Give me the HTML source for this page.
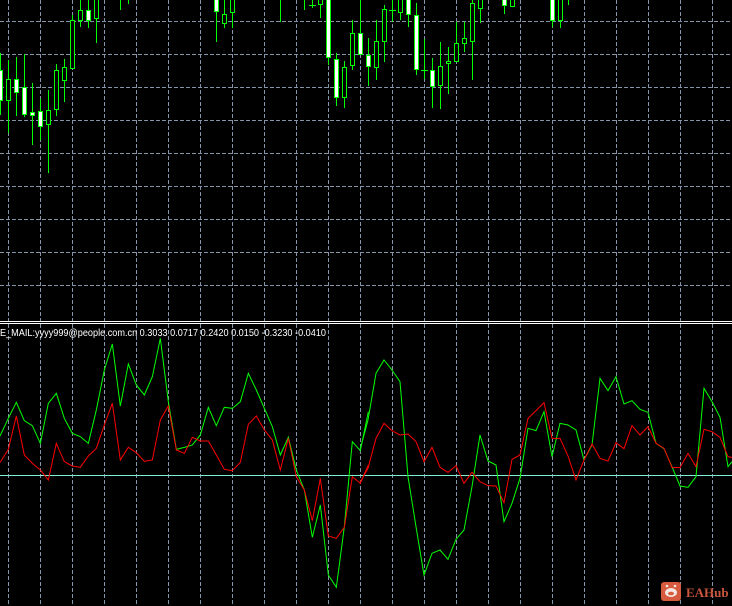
<!DOCTYPE html>
<html><head><meta charset="utf-8"><style>
html,body{margin:0;padding:0;background:#000;overflow:hidden}
svg{display:block}
</style></head><body>
<svg width="732" height="606" viewBox="0 0 732 606" xmlns="http://www.w3.org/2000/svg" shape-rendering="crispEdges">
<rect width="732" height="606" fill="#000"/>
<g stroke="#8494a8" stroke-width="1" stroke-dasharray="4 2">
<path d="M8.5 0V606M40.5 0V606M72.5 0V606M104.5 0V606M136.5 0V606M168.5 0V606M200.5 0V606M232.5 0V606M264.5 0V606M296.5 0V606M328.5 0V606M360.5 0V606M392.5 0V606M424.5 0V606M456.5 0V606M488.5 0V606M520.5 0V606M552.5 0V606M584.5 0V606M616.5 0V606M648.5 0V606M680.5 0V606M712.5 0V606"/>
<path d="M0 21.5H732M0 54.5H732M0 87.5H732M0 120.5H732M0 153.5H732M0 186.5H732M0 219.5H732M0 252.5H732M0 285.5H732"/>
</g>
<g stroke="#00ff00" stroke-width="1">
<path d="M0.5 53V115M8.5 60V133M16.5 57V116M24.5 54V117M32.5 83V145M40.5 99V140M48.5 90V173M56.5 64V116M64.5 59V102M72.5 15V69M80.5 0V27M88.5 0V28M96.5 0V43M120.5 0V10M128.5 0V4M216.5 0V42M224.5 0V28M232.5 0V28M280.5 0V22M304.5 0V10M312.5 0V8M320.5 0V18M328.5 0V65M336.5 53V106M344.5 61V108M352.5 20V70M360.5 0V55M368.5 38V86M376.5 20V80M384.5 5V62M392.5 0V22M400.5 0V20M408.5 0V27M416.5 3V75M424.5 39V79M432.5 58V108M440.5 42V109M448.5 47V94M456.5 22V62M464.5 22V52M472.5 0V80M480.5 0V23M504.5 0V14M512.5 0V7M552.5 0V27M560.5 0V28M568.5 0V5"/>
<path d="M309 5.5H316M389 10.5H396M421 70.5H428"/>
</g>
<g stroke="#00ff00" stroke-width="1">
<g fill="#fff">
<rect x="-1.5" y="70.5" width="4" height="30"/>
<rect x="14.5" y="79.5" width="4" height="13"/>
<rect x="22.5" y="87.5" width="4" height="27"/>
<rect x="30.5" y="112.5" width="4" height="3"/>
<rect x="38.5" y="111.5" width="4" height="15"/>
<rect x="86.5" y="10.5" width="4" height="10"/>
<rect x="214.5" y="-1.5" width="4" height="13"/>
<rect x="326.5" y="-1.5" width="4" height="59"/>
<rect x="334.5" y="59.5" width="4" height="38"/>
<rect x="358.5" y="33.5" width="4" height="21"/>
<rect x="366.5" y="55.5" width="4" height="11"/>
<rect x="406.5" y="-1.5" width="4" height="16"/>
<rect x="414.5" y="15.5" width="4" height="54"/>
<rect x="430.5" y="70.5" width="4" height="16"/>
<rect x="502.5" y="-1.5" width="4" height="7"/>
<rect x="550.5" y="-1.5" width="4" height="22"/>
</g>
<g fill="#000">
<rect x="6.5" y="79.5" width="4" height="21"/>
<rect x="46.5" y="110.5" width="4" height="14"/>
<rect x="54.5" y="70.5" width="4" height="39"/>
<rect x="62.5" y="67.5" width="4" height="13"/>
<rect x="70.5" y="20.5" width="4" height="48"/>
<rect x="78.5" y="10.5" width="4" height="10"/>
<rect x="94.5" y="-1.5" width="4" height="20"/>
<rect x="222.5" y="14.5" width="4" height="9"/>
<rect x="230.5" y="-1.5" width="4" height="14"/>
<rect x="318.5" y="-1.5" width="4" height="6"/>
<rect x="342.5" y="67.5" width="4" height="30"/>
<rect x="350.5" y="33.5" width="4" height="32"/>
<rect x="374.5" y="41.5" width="4" height="26"/>
<rect x="382.5" y="9.5" width="4" height="32"/>
<rect x="398.5" y="-1.5" width="4" height="14"/>
<rect x="438.5" y="66.5" width="4" height="19"/>
<rect x="446.5" y="61.5" width="4" height="2"/>
<rect x="454.5" y="43.5" width="4" height="18"/>
<rect x="462.5" y="38.5" width="4" height="5"/>
<rect x="470.5" y="3.5" width="4" height="38"/>
<rect x="478.5" y="-1.5" width="4" height="10"/>
<rect x="510.5" y="-1.5" width="4" height="8"/>
<rect x="558.5" y="-1.5" width="4" height="22"/>
</g>
</g>
<rect x="0" y="321" width="732" height="1" fill="#fff"/>
<rect x="0" y="323" width="732" height="1" fill="#fff"/>
<text x="0" y="336" font-family="Liberation Sans, sans-serif" font-size="10.5" fill="#fff" textLength="326" lengthAdjust="spacingAndGlyphs" shape-rendering="auto">E_MAIL:yyyy999@people.com.cn 0.3033 0.0717 0.2420 0.0150 -0.3230 -0.0410</text>
<rect x="0" y="475" width="732" height="1" fill="#7ff0d8"/>
<g fill="none" stroke-width="3" shape-rendering="auto" stroke-linejoin="miter">
<g transform="translate(0,330) scale(0.33333)">
<polyline stroke="#00ff00" points="0,318 25,265 49,217 73,272 97,287 121,340 145,220 169,190 193,265 217,310 241,320 265,340 289,240 313,120 337,42 361,228 385,102 409,165 433,195 457,140 481,25 505,215 529,358 553,352 577,345 601,315 625,232 649,287 673,232 697,235 721,215 745,130 769,180 793,235 817,290 841,375 865,322 889,420 913,480 937,622 961,525 985,735 1009,772 1033,590 1057,335 1081,362 1105,245"/>
<polyline stroke="#ff0000" points="0,398 25,358 49,258 73,375 97,400 121,420 145,450 169,340 193,395 217,408 241,412 265,378 289,355 313,285 337,220 361,390 385,352 409,368 433,394 457,390 481,270 505,228 529,360 553,370 577,322 601,333 625,333 649,375 673,418 697,422 721,397 745,283 769,258 793,300 817,330 841,420 865,325 889,440 913,480 937,572 961,445 985,618 1009,625 1033,592 1057,440 1081,460 1105,405"/>
</g>
<g transform="translate(360,330) scale(0.33333)">
<polyline stroke="#00ff00" points="0,360 24,270 48,130 72,90 96,120 120,155 144,440 168,590 192,735 216,670 240,660 264,688 288,628 312,600 336,470 360,315 384,393 408,405 432,575 456,520 480,445 504,295 528,302 552,245 576,380 600,280 624,285 648,300 672,390 696,345 720,145 744,182 768,140 792,222 816,212 840,238 864,247 888,340 912,356 936,410 960,468 984,472 1008,440 1032,175 1056,215 1080,262 1104,410 1116,395"/>
<polyline stroke="#ff0000" points="0,458 24,415 48,325 72,280 96,302 120,315 144,312 168,335 192,395 216,352 240,412 264,427 288,407 312,460 336,427 360,455 384,467 408,468 432,518 456,388 480,375 504,265 528,242 552,218 576,325 600,325 624,378 648,450 672,390 696,342 720,385 744,393 768,338 792,356 816,287 840,315 864,290 888,340 912,355 936,412 960,413 984,370 1008,410 1032,298 1056,305 1080,322 1104,380 1116,382"/>
</g>
</g>
<g shape-rendering="auto">
<rect x="661" y="582" width="20" height="19" rx="3" fill="#d55a3e"/>
<ellipse cx="671" cy="592.5" rx="6" ry="4.5" fill="#f4e6e0"/>
<circle cx="667" cy="586" r="1.3" fill="#f4e6e0"/>
<circle cx="675" cy="586" r="1.3" fill="#f4e6e0"/>
<ellipse cx="671" cy="593.5" rx="3" ry="1.8" fill="#d55a3e"/>
<text x="686" y="597" font-family="Liberation Serif, serif" font-size="13" fill="#c9553c" font-weight="bold">EAHub</text>
</g>
</svg>
</body></html>
